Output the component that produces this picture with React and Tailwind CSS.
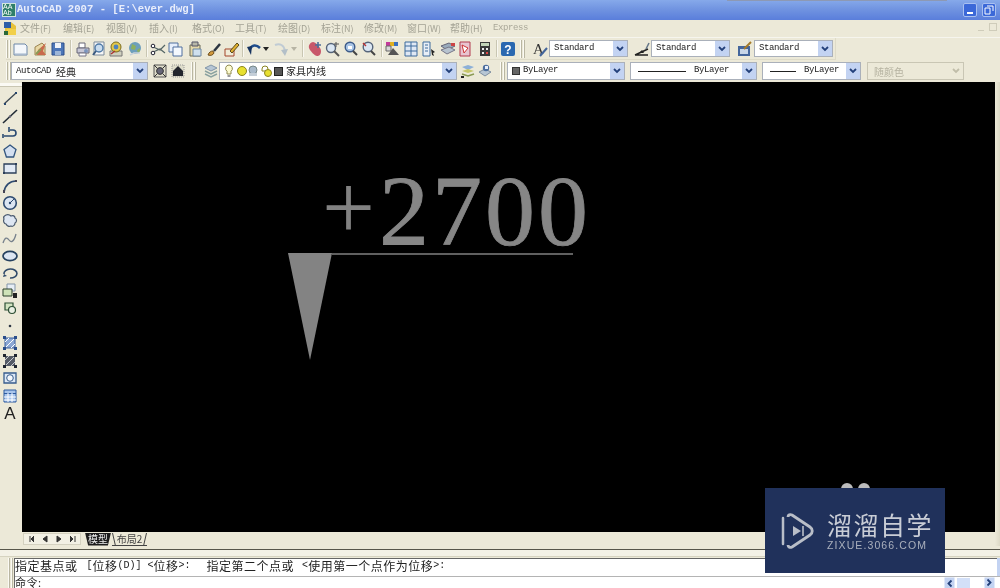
const S = ({ children, w = 16, h = 16 }) => (
  <svg width={w} height={h} viewBox="0 0 16 16" className="block shrink-0">{children}</svg>
);
const I = {
  new: <S><path d="M2 3h11l2 2v9H2z" fill="#f4f7fb" stroke="#6d87a8"/><path d="M3 13h12" stroke="#9fb2c8"/></S>,
  open: <S><path d="M3 14V6l7-4 3 3v9z" fill="#e9d9a6" stroke="#9a8350"/><path d="M6 9l8-7-3 8 3 4H5z" fill="#c96a4c"/><path d="M4 13l5-5" stroke="#8a9a55" strokeWidth="2"/></S>,
  save: <S><path d="M2 2h12v12H2z" fill="#4c76b8" stroke="#2d4f8a"/><path d="M5 2h6v5H5z" fill="#eef2f8"/><path d="M5 10h6v4H5z" fill="#9db6d8"/></S>,
  plot: <S><path d="M4 2h6v5H4z" fill="#fff" stroke="#667"/><path d="M2 7h12v5H2z" fill="#c8c8d6" stroke="#667"/><circle cx="11" cy="10" r="2" fill="#7b95bd"/><path d="M4 12h7v3H4z" fill="#fff" stroke="#778"/></S>,
  prev: <S><path d="M3 1h10v13H3z" fill="#f6f6f6" stroke="#7a8a9a"/><circle cx="8" cy="7" r="4" fill="#c9dcee" stroke="#4e79a6" strokeWidth="1.4"/><path d="M5 10l-3 4" stroke="#3a5a80" strokeWidth="2"/></S>,
  pub: <S><path d="M2 10h12v5H2z" fill="#cfcfbe" stroke="#777"/><circle cx="8" cy="6" r="5" fill="#e2c74a" stroke="#7c6d20"/><circle cx="8" cy="6" r="2.4" fill="#4d82bd"/><path d="M3 13l4-3" stroke="#a33" strokeWidth="1.5"/></S>,
  globe: <S><circle cx="8" cy="7" r="6" fill="#6d9fbb"/><path d="M5 3l4 2-1 4-4-1zM10 9l3-2v3l-2 2z" fill="#8db05f"/><path d="M3 14l4-2h6" stroke="#c9d2da" strokeWidth="1.5" fill="none"/></S>,
  cut: <S><path d="M1 5l9 4 5-5M1 12l9-4 5 4" stroke="#566" strokeWidth="1.2" fill="none"/><circle cx="3" cy="5" r="1.8" fill="#fff" stroke="#223"/><circle cx="3" cy="12" r="1.8" fill="#fff" stroke="#223"/></S>,
  copy: <S><path d="M1 2h9v9H1z" fill="#e6eefb" stroke="#4e6f9e"/><path d="M5 6h9v9H5z" fill="#f4f8fd" stroke="#4e6f9e"/></S>,
  paste: <S><path d="M3 4h10v11H3z" fill="#e4d7a8" stroke="#6d6d58"/><path d="M5 1h6v4H5z" fill="#b7b7a8" stroke="#556"/><path d="M6 8h8v7H6z" fill="#cfe0ee" stroke="#6d86a0"/></S>,
  brush: <S><path d="M2 14c1-3 3-4 5-4l1 2c-1 2-3 3-6 2z" fill="#d49a3d" stroke="#6d4e1d"/><path d="M8 10l6-7" stroke="#2b3440" strokeWidth="2.5"/></S>,
  block: <S><path d="M1 8h9v7H1z" fill="#f0ecd8" stroke="#a3442b"/><path d="M6 10l7-8 2 2-7 8z" fill="#e0b030" stroke="#5a4a1a"/></S>,
  undo: <S><path d="M14 7C10 3 6 4 4 8" stroke="#1f4d8c" strokeWidth="2.5" fill="none"/><path d="M1 6l5-1-1 9z" fill="#16335f"/></S>,
  redo: <S><path d="M1 4c5-2 9 0 10 6" stroke="#c0cbd4" strokeWidth="2" fill="none"/><path d="M7 9l7-1-3 7z" fill="#b3bfc8"/></S>,
  pan: <S><path d="M6 1c2 0 8 5 8 9s-2 5-4 5-7-5-8-8 2-6 4-6z" fill="#c8576a"/><path d="M11 1v6M8 4h6" stroke="#4d6f99" strokeWidth="1.6"/></S>,
  zoomr: <S><circle cx="6" cy="7" r="4.5" fill="#dbe7f3" stroke="#55647a" strokeWidth="1.4"/><path d="M9 10l5 5" stroke="#555" strokeWidth="2"/><path d="M11 1v5M9 3h5" stroke="#555"/></S>,
  zoomw: <S><circle cx="7" cy="6" r="4.8" fill="#a9c5e6" stroke="#3c5a88" strokeWidth="1.4"/><path d="M5 5h4v3H5z" fill="#fff"/><path d="M10 10l4 4" stroke="#444" strokeWidth="2"/></S>,
  zoomp: <S><circle cx="7" cy="6" r="4.8" fill="#dbe7f3" stroke="#55647a" strokeWidth="1.4"/><path d="M10 10l4 4" stroke="#444" strokeWidth="2"/><path d="M2 2l3 3" stroke="#b33" strokeWidth="1.4"/></S>,
  prop: <S><path d="M1 1h4v4H1z" fill="#c33a9a"/><path d="M5 1h4v4H5z" fill="#e0b020"/><path d="M9 1h4v4H9z" fill="#3a70c0"/><path d="M1 5h5v5H1z" fill="#d8d8d8" stroke="#666"/><path d="M8 7l6 7H3z" fill="#555"/></S>,
  grid: <S><path d="M2 1h12v14H2z" fill="#dfe8f4" stroke="#3d6a9c"/><path d="M2 5h12M2 10h12M8 1v14" stroke="#3d6a9c"/></S>,
  sheet: <S><path d="M2 1h7v14H2z" fill="#e8eef6" stroke="#3d6a9c"/><path d="M4 4h3M4 7h3M4 10h3" stroke="#3d6a9c"/><path d="M10 8l4 3-2 1 1 3-2-1z" fill="#222"/></S>,
  layers2: <S><path d="M1 5l8-3 6 3-8 4z" fill="#9ab" stroke="#667"/><path d="M1 9l8-3 6 3-8 4z" fill="#b7c3cf" stroke="#778"/><path d="M11 2h4v3h-4z" fill="#c44"/></S>,
  mark: <S><path d="M3 1h10v14H3z" fill="#e8c4d0" stroke="#b23a4e"/><path d="M5 4l6 3-4 5z" fill="#fff" stroke="#c33"/></S>,
  calc: <S><path d="M3 1h10v14H3z" fill="#3a3a3a"/><path d="M4 2h8v3H4z" fill="#c2d4b8"/><path d="M5 7h2v2H5zM9 7h2v2H9zM5 11h2v2H5z" fill="#eee"/><path d="M9 11h2v2H9z" fill="#d44"/></S>,
  help: <S><rect x="1" y="1" width="14" height="14" rx="2" fill="#2a68b0"/><text x="8" y="13" textAnchor="middle" fontSize="12" fontWeight="700" fill="#fff" fontFamily="Liberation Sans">?</text></S>,
  style: <S><text x="0" y="13" fontSize="15" fill="#333" fontFamily="Liberation Serif">A</text><path d="M7 15l7-8" stroke="#44659b" strokeWidth="2"/></S>,
  dim: <S><path d="M1 14L14 8M1 14h13" stroke="#222" strokeWidth="1.5"/><path d="M5 12l3-3 2 3z" fill="#222"/><path d="M12 8l3-6" stroke="#678" strokeWidth="1.5"/></S>,
  table: <S><path d="M1 5h12v10H1z" fill="#44669c"/><path d="M3 8h8v5H3z" fill="#c8d6e8"/><path d="M7 8l7-7" stroke="#a57a2a" strokeWidth="2"/></S>,
  ws1: <S><path d="M2 2h12v12H2z" fill="#dedcca" stroke="#555"/><circle cx="8" cy="8" r="3.4" fill="#667" stroke="#333"/><path d="M2 2l3 3M14 2l-3 3M2 14l3-3M14 14l-3-3" stroke="#333"/></S>,
  ws2: <S><path d="M2 2h12v12H2z" fill="#dedcca" stroke="#999" strokeDasharray="1 1"/><path d="M8 3l5 5v5H3V8z" fill="#23262e"/></S>,
  layer: <S><path d="M2 5l6-3 6 3-6 3z" fill="#b7c6d4" stroke="#8295a8"/><path d="M2 8l6 3 6-3M2 11l6 3 6-3" stroke="#8ba2a0" strokeWidth="1.4" fill="none"/></S>,
  layerp: <S><path d="M2 4l6-2 6 2-6 3z" fill="#8db0d8"/><path d="M2 8l6 2 6-2-6-2z" fill="#c7c76a"/><path d="M2 11l6 2 6-2" stroke="#8a9a55" strokeWidth="1.4" fill="none"/><path d="M1 13h3v2H1z" fill="#222"/></S>,
  layerq: <S><path d="M2 9l6-3 6 3-6 4z" fill="#b7c6d4" stroke="#7d8ea0"/><circle cx="9" cy="5" r="3.2" fill="#4e6f9e"/><path d="M8 3h3v3H8z" fill="#e6eefb"/></S>,
};
const L = {
  line: <S><path d="M2 14L14 3" stroke="#3a4652" strokeWidth="1.3"/><path d="M2 13h2v2H2zM13 2h2v2h-2z" fill="#26476e"/></S>,
  xline: <S><path d="M1 15L15 2" stroke="#222c36" strokeWidth="1.6"/><circle cx="8" cy="8.5" r="1.2" fill="#667"/></S>,
  pline: <S><path d="M2 11h9c4 0 4-6 0-6H8" stroke="#2a4a72" strokeWidth="1.6" fill="none"/><path d="M7 2v5M1 9v4" stroke="#2a4a72" strokeWidth="1.6"/></S>,
  poly: <S><path d="M8 2l6 4.5-2.4 7.5H4.4L2 6.5z" fill="#d3dff0" stroke="#32557f" strokeWidth="1.3"/></S>,
  rect: <S><path d="M2 4h12v9H2z" fill="#e2eaf5" stroke="#2b3f5a" strokeWidth="1.3"/><path d="M1 12h2v2H1zM13 3h2v2h-2z" fill="#2b3f5a"/></S>,
  arc: <S><path d="M2 14C3 7 8 3 14 3" stroke="#2d4a70" strokeWidth="1.7" fill="none"/><path d="M1 12h2v3H1zM13 2h2v2h-2z" fill="#445"/></S>,
  circle: <S><circle cx="8" cy="8" r="6.3" fill="#dbe5f2" stroke="#2d4a70" strokeWidth="1.6"/><path d="M8 8l4-4" stroke="#2d4a70"/><circle cx="8" cy="8" r="1.2" fill="#2d4a70"/></S>,
  cloud: <S><path d="M4 2c2-1 4 0 5 1 2-1 4 0 4 2 2 1 2 4 0 5 0 2-2 4-4 3-2 1-4 0-5-2-2 0-3-3-2-5-1-2 0-3 2-4z" fill="#dde6f2" stroke="#4a5a6e" strokeWidth="1.2"/></S>,
  spline: <S><path d="M1 13c2-6 4-6 6-3s5 2 7-6" stroke="#77818c" strokeWidth="1.3" fill="none"/></S>,
  ellipse: <S><ellipse cx="8" cy="8" rx="7" ry="4.6" fill="#dbe5f2" stroke="#24405f" strokeWidth="1.7"/></S>,
  earc: <S><path d="M2 9a6.5 4.5 0 1 1 6 4" stroke="#2f4a6a" strokeWidth="1.6" fill="none"/><path d="M2 9l-1 3 4-1z" fill="#2f4a6a"/></S>,
  insert: <S><path d="M5 1h8v7H5z" fill="#e6edf5" stroke="#8395a8"/><path d="M1 6h9v7H1z" fill="#cfe2b8" stroke="#2a3f2a"/><path d="M11 10h4v5h-4z" fill="#222"/></S>,
  block: <S><path d="M3 3h8v7H3z" fill="#d3e4c2" stroke="#2c4f34" strokeWidth="1.2"/><circle cx="10" cy="10" r="3.5" fill="#eaf0e4" stroke="#2c4f34" strokeWidth="1.2"/></S>,
  point: <S><circle cx="8" cy="8" r="1.3" fill="#2d3744"/></S>,
  hatch: <S><path d="M3 3h10v10H3z" fill="#8da8d4" stroke="#3b5e9e"/><path d="M3 7l4-4M3 13L13 3M9 13l4-4" stroke="#fff"/><path d="M1 1h3v3H1zM12 1h3v3h-3zM1 12h3v3H1zM12 12h3v3h-3z" fill="#2a4d8a"/></S>,
  gradient: <S><path d="M3 3h10v10H3z" fill="#555b66"/><path d="M3 7l4-4M3 13L13 3M9 13l4-4" stroke="#c8ccd2"/><path d="M1 1h3v3H1zM12 1h3v3h-3zM1 12h3v3H1zM12 12h3v3h-3z" fill="#1e2530"/></S>,
  region: <S><path d="M2 3h12v10H2z" fill="#dce7f5" stroke="#365c8d" strokeWidth="1.3"/><circle cx="8" cy="8" r="3.3" fill="#f3f7fc" stroke="#365c8d"/></S>,
  table: <S><path d="M2 2h12v12H2z" fill="#a9c6ec" stroke="#2c5ba0"/><path d="M2 5h12v1H2z" fill="#2c5ba0"/><path d="M2 9h12M2 12h12M6 5v9M10 5v9" stroke="#fff"/></S>,
};
const Grip = ({ h = "h-[18px]" }) => (
  <div className={`flex gap-[1px] ${h} shrink-0`}>
    <div className="w-[2px] h-full bg-[#fbfaf4] border-r border-[#b9b6a2]" />
    <div className="w-[2px] h-full bg-[#fbfaf4] border-r border-[#b9b6a2]" />
  </div>
);
const Sep = ({ mx = "mx-[3px]" }) => <div className={`w-[2px] h-[17px] border-l border-[#c9c6b2] bg-[#f9f8f1] shrink-0 ${mx}`} />;
const Chev = ({ off }) => (
  <svg width="8" height="6" viewBox="0 0 8 6" className="block">
    <path d="M1 1l3 3 3-3" stroke={off ? "#c0bda9" : "#23407a"} strokeWidth="1.8" fill="none" />
  </svg>
);
const Combo = ({ w, h = "h-[17px]", off, children, cls = "" }) => (
  <div className={`flex items-center justify-between shrink-0 border ${off ? "border-[#c9c6b4] bg-[#ece9d8] text-[#b5b2a0]" : "border-[#aab0ba] bg-white text-[#222]"} ${w} ${h} ${cls}`}>
    <div className="flex items-center min-w-0 pl-[4px] whitespace-pre">{children}</div>
    <div className={`h-full w-[14px] flex items-center justify-center shrink-0 ${off ? "bg-[#ece9d8]" : "bg-[#c3d3f2]"}`}><Chev off={off} /></div>
  </div>
);
const mono = "font-['Liberation_Mono',monospace] text-[9px] tracking-[-0.4px]";
const lat = "font-['Liberation_Mono',monospace] text-[10px]";
const cjk = "font-['Noto_Sans_CJK_SC','Liberation_Sans',sans-serif]";
const cmd = "font-['Noto_Sans_CJK_SC','Liberation_Sans',sans-serif] tracking-[0.5px]";
const menu = [["文件", "F"], ["编辑", "E"], ["视图", "V"], ["插入", "I"], ["格式", "O"], ["工具", "T"], ["绘图", "D"], ["标注", "N"], ["修改", "M"], ["窗口", "W"], ["帮助", "H"]];
const Ic = ({ n, cls = "mr-[2px]" }) => <div className={`w-[16px] h-[16px] shrink-0 ${cls}`}>{I[n]}</div>;
const DashLine = ({ w }) => <div className={`h-px bg-[#222] ${w} mx-[3px]`} />;

export default function App() {
  const left = ["line", "xline", "pline", "poly", "rect", "arc", "circle", "cloud", "spline", "ellipse", "earc", "insert", "block", "point", "hatch", "gradient", "region", "table"];
  return (
    <div className="w-[1000px] h-[588px] overflow-hidden bg-[#ece9d8] flex flex-col relative select-none blur-[0.35px]">
      {/* title bar */}
      <div className="h-[20px] shrink-0 bg-gradient-to-b from-[#86a9ea] via-[#6f92e0] to-[#5a7edb] flex items-center pl-[2px] relative">
        <div className="w-[14px] h-[14px] bg-[#2f7f6a] border border-[#cfe4dc] text-[7px] leading-[6px] text-white font-['Liberation_Sans',sans-serif] flex flex-wrap shrink-0 overflow-hidden"><span>A</span><span>A</span><span>A</span><span>b</span></div>
        <span className="ml-[1px] font-['Liberation_Mono',monospace] font-bold text-[10.6px] text-[#e9eefb] whitespace-pre">AutoCAD 2007 - [E:\ever.dwg]</span>
        <div className="absolute left-[727px] top-0 w-[220px] h-[1px] bg-[#8d99b4]" />
        <div className="ml-auto flex gap-[5px] pr-[4px]">
          <div className="w-[14px] h-[14px] rounded-[2px] bg-[#3b68d8] border border-[#a9c0f0] flex items-end justify-center pb-[2px]"><div className="w-[6px] h-[2px] bg-white" /></div>
          <div className="w-[14px] h-[14px] rounded-[2px] bg-[#3b68d8] border border-[#a9c0f0] flex items-center justify-center"><svg width="10" height="10" viewBox="0 0 10 10"><path d="M3 1h6v5M1 3h5v6H1z" stroke="#fff" fill="none" /></svg></div>
        </div>
      </div>
      {/* menu */}
      <div className="h-[17px] shrink-0 flex items-center relative bg-[#ece9d8]">
        <svg width="15" height="15" viewBox="0 0 15 15" className="ml-[3px] mr-[2px] shrink-0"><path d="M2 5l6-4 5 4v9H2z" fill="#e8c23a" /><path d="M1 1h7v6H1z" fill="#2e5fa8" /><path d="M4 8h9v6H4z" fill="#f2d04a" /><path d="M1 10h4v4H1z" fill="#2b6a3a" /></svg>
        {menu.map(([a, b]) => (
          <div key={a} className={`w-[43px] shrink-0 text-[#a3a294] text-[10px] -mt-[2px] whitespace-pre ${cjk}`}>{a}<span className="text-[9px]">({b})</span></div>
        ))}
        <span className="font-['Liberation_Mono',monospace] text-[9px] tracking-[-0.4px] text-[#a9a798]">Express</span>
        <div className="absolute right-[3px] top-[3px] flex gap-[5px] items-center">
          <div className="w-[6px] h-[1px] mt-[7px] bg-[#cfccba]" />
          <div className="w-[8px] h-[8px] border border-[#cfccba]" />
        </div>
      </div>
      {/* toolbar 1 */}
      <div className="h-[23px] shrink-0 flex items-center pl-[6px] border-t border-[#f6f5ee]">
        <div className="flex items-center w-[830px] h-[22px] border-r border-b border-[#dedbc8]">
          <Grip />
          <div className="w-[1px]" />
          <Ic n="new" cls="mr-[4px]" /><Ic n="open" cls="mr-[2px]" /><Ic n="save" cls="mr-[1px]" />
          <Sep mx="mx-[3px]" />
          <Ic n="plot" cls="mr-0" /><Ic n="prev" cls="mr-[1px]" /><Ic n="pub" cls="mr-[3px]" /><Ic n="globe" cls="mr-[1px]" />
          <Sep mx="mx-[2px]" />
          <Ic n="cut" cls="mr-[2px]" /><Ic n="copy" cls="mr-[3px]" /><Ic n="paste" cls="mr-[3px]" /><Ic n="brush" cls="mr-[2px]" /><Ic n="block" cls="mr-0" />
          <Sep mx="mx-[2px]" />
          <Ic n="undo" cls="mr-[1px]" /><svg width="6" height="4" viewBox="0 0 6 4" className="mr-[5px] shrink-0"><path d="M0 0h6L3 4z" fill="#222" /></svg>
          <Ic n="redo" cls="mr-[1px]" /><svg width="6" height="4" viewBox="0 0 6 4" className="mr-[2px] shrink-0"><path d="M0 0h6L3 4z" fill="#b7b4a4" /></svg>
          <Sep mx="mx-[3px]" />
          <Ic n="pan" cls="mr-[2px]" /><Ic n="zoomr" cls="mr-[2px]" /><Ic n="zoomw" cls="mr-[2px]" /><Ic n="zoomp" />
          <Sep mx="mx-[2px]" />
          <Ic n="prop" cls="mr-[2px]" /><Ic n="grid" cls="mr-[2px]" /><Ic n="sheet" cls="mr-[3px]" /><Ic n="layers2" cls="mr-[1px]" /><Ic n="mark" cls="mr-[4px]" /><Ic n="calc" />
          <Sep mx="mx-[1px]" />
          <Ic n="help" cls="ml-[1px] mr-[4px]" />
          <Grip />
          <Ic n="style" cls="ml-[8px] mr-0" />
          <Combo w="w-[79px]"><span className={mono}>Standard</span></Combo>
          <Ic n="dim" cls="ml-[6px] mr-[1px]" />
          <Combo w="w-[79px]"><span className={mono}>Standard</span></Combo>
          <Ic n="table" cls="ml-[7px] mr-[1px]" />
          <Combo w="w-[79px]"><span className={mono}>Standard</span></Combo>
        </div>
      </div>
      {/* toolbar 2 */}
      <div className="h-[22px] shrink-0 flex items-center pl-[6px]">
        <Grip />
        <Combo w="w-[137px]" h="h-[18px]"><span className={`${mono} mt-[2px]`}>AutoCAD </span><span className={`${cjk} text-[10px]`}>经典</span></Combo>
        <Ic n="ws1" cls="ml-[4px] mr-[2px]" /><Ic n="ws2" cls="mr-[5px]" />
        <Grip />
        <Ic n="layer" cls="ml-[7px] mr-[0px]" />
        <Combo w="w-[238px]" h="h-[18px]">
          <div className="flex items-center gap-[1px] -ml-[1px]">
            <svg width="50" height="14" viewBox="0 0 50 14"><path d="M6 1a3.5 3.5 0 0 1 2 6.3V10H4V7.300A3.500 3.500 0 0 1 6 1z" fill="#fdfbd0" stroke="#8f8a50" /><path d="M4.500 11h3v2h-3z" fill="#999" /><circle cx="19" cy="7" r="4.500" fill="#e8e030" stroke="#8a8420" /><circle cx="30" cy="6" r="4" fill="#a9bacb" stroke="#788" /><path d="M26 9h8v3h-8z" fill="#c4ced8" /><path d="M39 5a3 3 0 0 1 6 0v2h-6z" fill="#fff" stroke="#8a8420" /><circle cx="45" cy="9" r="3.500" fill="#e8e030" stroke="#8a8420" /></svg>
            <div className="w-[9px] h-[9px] bg-[#555] border border-[#222]" />
            <span className={`${cjk} text-[10px] ml-[2px] -mt-[1px] text-[#222]`}>家具内线</span>
          </div>
        </Combo>
        <Ic n="layerp" cls="ml-[3px] mr-[1px]" /><Ic n="layerq" cls="mr-[7px]" />
        <Grip />
        <Combo w="w-[118px]" h="h-[18px]" cls="ml-[2px]"><div className="w-[8px] h-[8px] bg-[#666] border border-[#333] mr-[3px]" /><span className={mono}>ByLayer</span></Combo>
        <Combo w="w-[127px]" h="h-[18px]" cls="ml-[5px]"><DashLine w="w-[48px]" /><span className={mono}> ByLayer</span></Combo>
        <Combo w="w-[99px]" h="h-[18px]" cls="ml-[5px]"><DashLine w="w-[26px]" /><span className={mono}> ByLayer</span></Combo>
        <Combo w="w-[97px]" h="h-[18px]" off cls="ml-[6px]"><span className={`${cjk} text-[10px] ml-[2px]`}>随颜色</span></Combo>
      </div>
      {/* main */}
      <div className="flex-1 min-h-0 flex">
        <div className="w-[22px] shrink-0 flex flex-col items-center">
          <div className="w-full h-[4px] mt-[1px] bg-[#fbfaf4] border-b border-[#c9c6b2]" />
          <div className="flex flex-col gap-[1.5px] pt-[3px] pr-[2px]">
            {left.map((k) => <div key={k} className="w-[16px] h-[16px]">{L[k]}</div>)}
            <div className="w-[16px] h-[18px] text-[17px] leading-[18px] text-center text-[#222] font-['Liberation_Sans',sans-serif]">A</div>
          </div>
        </div>
        <div className="flex-1 min-w-0 flex flex-col">
          <div className="flex-1 bg-black relative overflow-hidden">
            <div className="absolute left-[300px] top-[65px] font-['Liberation_Serif',serif] text-[#828282] text-[94px] leading-[120px]">+</div>
            <div className="absolute left-[357px] top-[69px] font-['Liberation_Serif',serif] text-[#868686] text-[100px] leading-[120px] whitespace-pre tracking-[3px] [-webkit-text-stroke:0.8px_#868686]">2700</div>
            <div className="absolute left-[310px] top-[171px] w-[241px] h-[2px] bg-[#606060]" />
            <svg className="absolute left-[266px] top-[171px]" width="46" height="108" viewBox="0 0 46 108"><path d="M0 0h44L22 107z" fill="#838383" /></svg>
          </div>
          <div className="h-[14px] shrink-0 flex items-center gap-0 bg-[#ece9d8]">
            <div className="flex items-center h-[12px] ml-[1px] border border-[#d4d1c0] bg-[#f2f0e4] text-[#333]">
              {["M4 1v6M8 1L5 4l3 3", "M7 1L3 4l4 3z", "M3 1l4 3-4 3z", "M2 1l3 3-3 3M7 1v6"].map((d) => (
                <div key={d} className="w-[14px] flex justify-center"><svg width="10" height="8" viewBox="0 0 10 8"><path d={d} fill="#333" stroke="#333" /></svg></div>
              ))}
            </div>
            <div className={`ml-[4px] w-[26px] h-[13px] bg-[#1c1c1c] text-[#eee] text-[10px] leading-[12px] text-center [clip-path:polygon(0_0,100%_0,88%_100%,12%_100%)] ${cjk}`}>模型</div>
            <div className={`relative ml-[1px] w-[35px] h-[13px] border-b border-[#444] text-[#444] text-[10px] leading-[12px] text-center ${cjk}`}>
              布局2
              <svg className="absolute left-0 top-0" width="35" height="13" viewBox="0 0 35 13"><path d="M0.500 0l3 13M34.500 0l-3 13" stroke="#444" fill="none" /></svg>
            </div>
          </div>
        </div>
        <div className="w-[5px] shrink-0 bg-gradient-to-r from-[#ece9d8] to-[#dcd9c6]" />
      </div>
      {/* divider */}
      <div className="h-[9px] shrink-0 bg-[#ece9d8] mt-[3px] border-t border-[#57564a]">
        <div className="h-[7px] bg-[#f3f1e6] border-b border-[#d6d3c0]" />
      </div>
      {/* command */}
      <div className="h-[30px] shrink-0 flex pl-[8px]">
        <Grip h="h-full" />
        <div className="w-[1px]" />
        <div className="flex-1 min-w-0 bg-white border-l border-t border-[#666] flex flex-col">
          <div className="h-[18px] border-b border-[#b4b4b4] flex items-center pb-[3px] text-[12px] leading-[14px] whitespace-pre text-[#222]">
            <span className={cmd}>指定基点或</span>
            <span className={`${lat} ml-[3px]`}> [</span><span className={cmd}>位移</span><span className={lat}>(D)] &lt;</span><span className={cmd}>位移</span><span className={lat}>&gt;:   </span>
            <span className={`${cmd} -ml-[2px]`}>指定第二个点或</span><span className={`${lat} ml-[2px]`}> &lt;</span><span className={cmd}>使用第一个点作为位移</span><span className={lat}>&gt;:</span>
          </div>
          <div className="flex-1 flex items-center text-[11px] leading-[11px] text-[#222] relative">
            <span className={cmd}>命令:</span>
            <div className="absolute right-[5px] top-[1px] flex items-center h-[10px]">
              <div className="w-[11px] h-[10px] bg-[#c3d3f2] flex items-center justify-center rotate-90"><Chev /></div>
              <div className="w-[13px] h-[10px] bg-[#d3e0f8] ml-[2px]" />
              <div className="w-[14px]" />
              <div className="w-[11px] h-[10px] bg-[#c3d3f2] flex items-center justify-center -rotate-90"><Chev /></div>
            </div>
          </div>
        </div>
      </div>
      <div className="absolute right-0 top-[558px] w-[3px] h-[18px] bg-[#c3d3f2]" />
      {/* watermark */}
      <div className="absolute left-[841px] top-[483px] w-[12px] h-[12px] rounded-full bg-[#bcbcbc]" />
      <div className="absolute left-[858px] top-[483px] w-[12px] h-[12px] rounded-full bg-[#bcbcbc]" />
      <div className="absolute left-[765px] top-[488px] w-[180px] h-[85px] bg-[#20315b] flex items-center pl-[15px]">
        <svg width="34" height="38" viewBox="0 0 34 38" className="shrink-0">
          <path d="M3 6v26" stroke="#b9bec8" strokeWidth="2.500" strokeLinecap="round" />
          <path d="M8 5c0-2 2-3 4-2l18 12c3 2 3 6 0 8L12 35c-2 1-4 0-4-2" fill="none" stroke="#b9bec8" strokeWidth="2.800" strokeLinejoin="round" />
          <path d="M13 14l8 5-8 5z" fill="#b9bec8" /><path d="M23 14v10" stroke="#b9bec8" strokeWidth="1.600" />
        </svg>
        <div className="ml-[13px] flex flex-col">
          <div className={`text-[25px] leading-[28px] tracking-[1.5px] text-[#c9cdd6] whitespace-pre ${cjk}`}>溜溜自学</div>
          <div className="mt-[1px] text-[10.5px] leading-[12px] tracking-[1.1px] text-[#aab0bd] font-['Liberation_Sans',sans-serif] whitespace-pre">ZIXUE.3066.COM</div>
        </div>
      </div>
    </div>
  );
}
